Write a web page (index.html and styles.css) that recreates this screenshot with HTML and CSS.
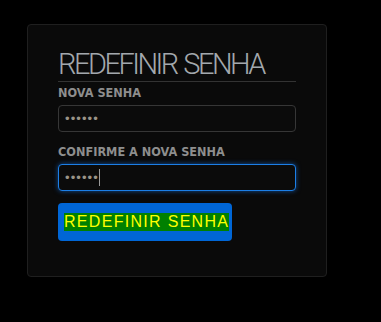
FILE: index.html
```html
<!DOCTYPE html>
<html lang="pt">
<head>
<meta charset="utf-8">
<title>Redefinir senha</title>
<link rel="stylesheet" href="styles.css">
</head>
<body>
<div class="card">
  <h1 class="title">REDEFINIR SENHA</h1>
  <hr class="rule">
  <div class="group">
    <label class="label" for="nova">NOVA SENHA</label>
    <div class="field" id="nova"><span class="dots">••••••</span></div>
  </div>
  <div class="group">
    <label class="label" for="conf">CONFIRME A NOVA SENHA</label>
    <div class="field field-focus" id="conf"><span class="dots">••••••</span><span class="caret"></span></div>
  </div>
  <button class="btn" type="button"><span class="btn-text">REDEFINIR SENHA</span></button>
</div>
</body>
</html>
```

FILE: styles.css
```css
html, body {
  margin: 0;
  padding: 0;
  background: #000;
}
body {
  padding: 24px 0 0 27px;
  font-family: "Liberation Sans", Arial, sans-serif;
}
.card {
  box-sizing: border-box;
  width: 300px;
  height: 253px;
  background: #0a0a0a;
  border: 1px solid #1f1f1f;
  border-radius: 4px;
  padding: 23px 30px 0 30px;
}
.title {
  margin: 0;
  font-family: Roboto, "Liberation Sans", sans-serif;
  font-weight: 300;
  font-size: 29px;
  line-height: 32px;
  letter-spacing: -2.5px;
  word-spacing: 2px;
  color: #a3a8ad;
  white-space: nowrap;
}
.rule {
  margin: 1px 0 3px 0;
  border: 0;
  height: 1px;
  background: #333;
}
.group {
  display: flex;
  flex-direction: column;
  margin-bottom: 12px;
}
.label {
  font-family: "DejaVu Sans", sans-serif;
  font-stretch: condensed;
  font-weight: bold;
  font-size: 12.6px;
  line-height: 16px;
  color: #8e8e8e;
  margin-bottom: 4px;
}
.field {
  box-sizing: border-box;
  display: flex;
  align-items: center;
  width: 238px;
  height: 27px;
  margin: 0;
  background: #0b0b0b;
  border: 1px solid #363636;
  border-radius: 4px;
  padding: 0 6px;
}
.field-focus {
  border-color: #1c7fe6;
  box-shadow: 0 0 5px rgba(20, 120, 240, 0.6);
}
.dots {
  font-family: "Liberation Sans", sans-serif;
  font-size: 13px;
  letter-spacing: 1.1px;
  color: #9a9488;
}
.caret {
  width: 1px;
  height: 17px;
  background: #9a9a9a;
}
.btn {
  display: block;
  margin: 0;
  border: 0;
  border-radius: 4px;
  background: #0066d6;
  padding: 10px 3px 10px 6px;
  cursor: pointer;
}
.btn-text {
  display: block;
  background: #008000;
  color: #ffff00;
  font-family: "Liberation Sans", Arial, sans-serif;
  font-size: 16px;
  line-height: 18px;
  letter-spacing: 1.3px;
}
```
